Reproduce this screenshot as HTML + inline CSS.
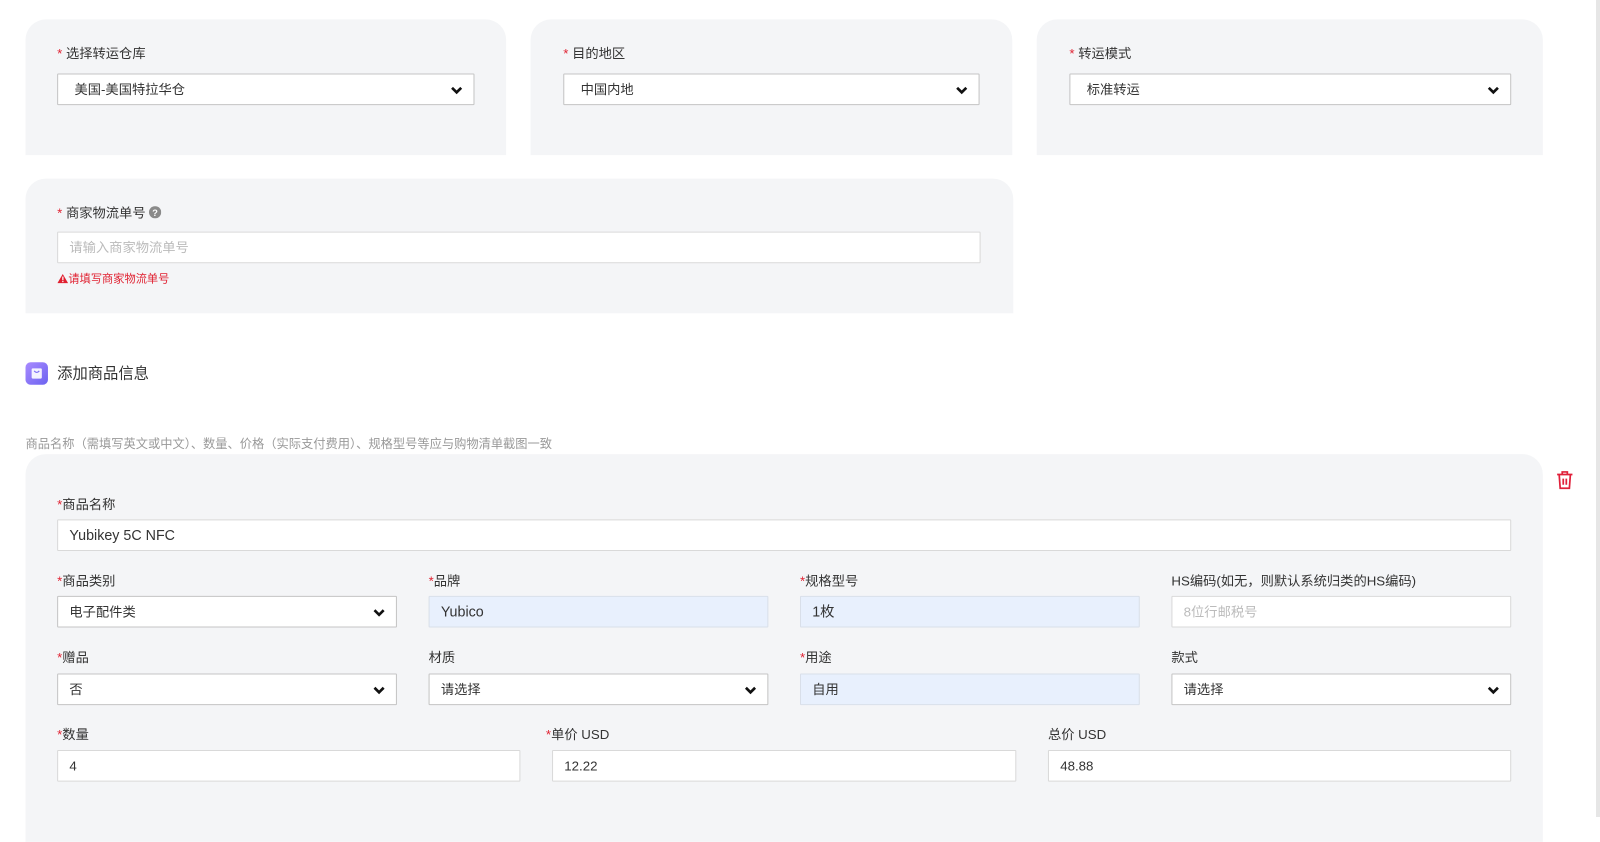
<!DOCTYPE html>
<html><head><meta charset="utf-8"><style>
*{box-sizing:border-box;margin:0;padding:0}
body{width:1600px;height:817px;overflow:hidden;background:#fff;position:relative;font-family:"Liberation Sans","Noto Sans CJK SC",sans-serif;color:#333}
#w{position:absolute;left:0;top:0;width:1568px;height:801px;transform:scale(1.0204);transform-origin:0 0}
.a{position:absolute}
.card{position:absolute;background:#f4f5f7;border-radius:20px 20px 0 0}
.lbl{position:absolute;font-size:13px;color:#333;line-height:16px;white-space:nowrap}
.lbl i{font-style:normal;color:#e02030}
.in{position:absolute;height:31px;background:#fff;border:1px solid #d9d9d9;font-size:13px;line-height:29px;padding-left:11px;color:#333;white-space:nowrap;border-radius:1px}
.in.sel{border-color:#c4c4c4}
.in.ro{background:#e8f0fd;border-color:#d9dfe9}
.in.ph{color:#bbb}
.chev{position:absolute;right:10px;top:11px;width:13px;height:9px}
</style></head><body>
<div class="a" style="left:1596px;top:0;width:4px;height:817px;background:#e6e6e6"></div>
<div id="w">
<div class="card" style="left:25px;top:19px;width:471px;height:133px"></div>
<div class="card" style="left:520px;top:19px;width:472px;height:133px"></div>
<div class="card" style="left:1016px;top:19px;width:496px;height:133px"></div>
<div class="card" style="left:25px;top:175px;width:968px;height:132px"></div>

<div class="lbl" style="left:56px;top:45px"><i>*</i> 选择转运仓库</div>
<div class="in sel" style="left:56px;top:72px;width:409px;padding-left:16px">美国-美国特拉华仓<svg class="chev" viewBox="0 0 13 9"><path d="M2 2l4.5 4.5L11 2" stroke="#111" stroke-width="2.6" fill="none"/></svg></div>
<div class="lbl" style="left:552px;top:45px"><i>*</i> 目的地区</div>
<div class="in sel" style="left:552px;top:72px;width:408px;padding-left:16px">中国内地<svg class="chev" viewBox="0 0 13 9"><path d="M2 2l4.5 4.5L11 2" stroke="#111" stroke-width="2.6" fill="none"/></svg></div>
<div class="lbl" style="left:1048px;top:45px"><i>*</i> 转运模式</div>
<div class="in sel" style="left:1048px;top:72px;width:433px;padding-left:16px">标准转运<svg class="chev" viewBox="0 0 13 9"><path d="M2 2l4.5 4.5L11 2" stroke="#111" stroke-width="2.6" fill="none"/></svg></div>

<div class="lbl" style="left:56px;top:201px"><i>*</i> 商家物流单号 <svg width="12" height="12" viewBox="0 0 12 12" style="vertical-align:-1px"><circle cx="6" cy="6" r="6" fill="#8a8a8a"/><text x="6" y="9.5" font-size="9" font-weight="bold" fill="#fff" text-anchor="middle" font-family="Liberation Sans">?</text></svg></div>
<div class="in ph" style="left:56px;top:227px;width:905px">请输入商家物流单号</div>
<div class="lbl" style="left:56px;top:266px;font-size:11px;color:#e02030"><svg width="11" height="10" viewBox="0 0 11 10" style="vertical-align:-1px"><path d="M5.5 0.5L10.7 9.5H0.3Z" fill="#e02030"/><rect x="5" y="3" width="1.2" height="3.6" fill="#fff"/><rect x="5" y="7.3" width="1.2" height="1.2" fill="#fff"/></svg>请填写商家物流单号</div>

<div class="a" style="left:25px;top:355px;width:22px;height:22px;border-radius:5px;background:linear-gradient(135deg,#a98bff,#6c63f0)"><svg width="22" height="22" viewBox="0 0 22 22"><rect x="6" y="6" width="10" height="10" rx="1" fill="#fff" opacity=".9"/><path d="M8.5 8.5q2.5 3 5 0" stroke="#7a6cf5" stroke-width="1.2" fill="none"/></svg></div>
<div class="lbl" style="left:56px;top:358px;font-size:15px;line-height:18px">添加商品信息</div>
<div class="lbl" style="left:25px;top:427px;font-size:12px;color:#999">商品名称（需填写英文或中文）、数量、价格（实际支付费用）、规格型号等应与购物清单截图一致</div>

<div class="card" style="left:25px;top:445px;width:1487px;height:380px"></div>
<svg class="a" style="left:1525px;top:461px" width="17" height="19" viewBox="0 0 17 19"><path d="M1 4h15M6 4V1.5h5V4M3 4l1 13.5h9L14 4M7 8v6M10 8v6" stroke="#e0203a" stroke-width="1.7" fill="none"/></svg>

<div class="lbl" style="left:56px;top:487px"><i>*</i>商品名称</div>
<div class="in" style="left:56px;top:509px;width:1425px;font-size:14px">Yubikey 5C NFC</div>

<div class="lbl" style="left:56px;top:562px"><i>*</i>商品类别</div>
<div class="in sel" style="left:56px;top:584px;width:333px">电子配件类<svg class="chev" viewBox="0 0 13 9"><path d="M2 2l4.5 4.5L11 2" stroke="#111" stroke-width="2.6" fill="none"/></svg></div>
<div class="lbl" style="left:420px;top:562px"><i>*</i>品牌</div>
<div class="in ro" style="left:420px;top:584px;width:333px;font-size:14px">Yubico</div>
<div class="lbl" style="left:784px;top:562px"><i>*</i>规格型号</div>
<div class="in ro" style="left:784px;top:584px;width:333px;font-size:14px">1枚</div>
<div class="lbl" style="left:1148px;top:562px">HS编码(如无，则默认系统归类的HS编码)</div>
<div class="in ph" style="left:1148px;top:584px;width:333px">8位行邮税号</div>

<div class="lbl" style="left:56px;top:637px"><i>*</i>赠品</div>
<div class="in sel" style="left:56px;top:660px;width:333px">否<svg class="chev" viewBox="0 0 13 9"><path d="M2 2l4.5 4.5L11 2" stroke="#111" stroke-width="2.6" fill="none"/></svg></div>
<div class="lbl" style="left:420px;top:637px">材质</div>
<div class="in sel" style="left:420px;top:660px;width:333px">请选择<svg class="chev" viewBox="0 0 13 9"><path d="M2 2l4.5 4.5L11 2" stroke="#111" stroke-width="2.6" fill="none"/></svg></div>
<div class="lbl" style="left:784px;top:637px"><i>*</i>用途</div>
<div class="in ro" style="left:784px;top:660px;width:333px">自用</div>
<div class="lbl" style="left:1148px;top:637px">款式</div>
<div class="in sel" style="left:1148px;top:660px;width:333px">请选择<svg class="chev" viewBox="0 0 13 9"><path d="M2 2l4.5 4.5L11 2" stroke="#111" stroke-width="2.6" fill="none"/></svg></div>

<div class="lbl" style="left:56px;top:712px"><i>*</i>数量</div>
<div class="in" style="left:56px;top:735px;width:454px">4</div>
<div class="lbl" style="left:535px;top:712px"><i>*</i>单价 USD</div>
<div class="in" style="left:541px;top:735px;width:455px">12.22</div>
<div class="lbl" style="left:1027px;top:712px">总价 USD</div>
<div class="in" style="left:1027px;top:735px;width:454px">48.88</div>
</div>
</body></html>
